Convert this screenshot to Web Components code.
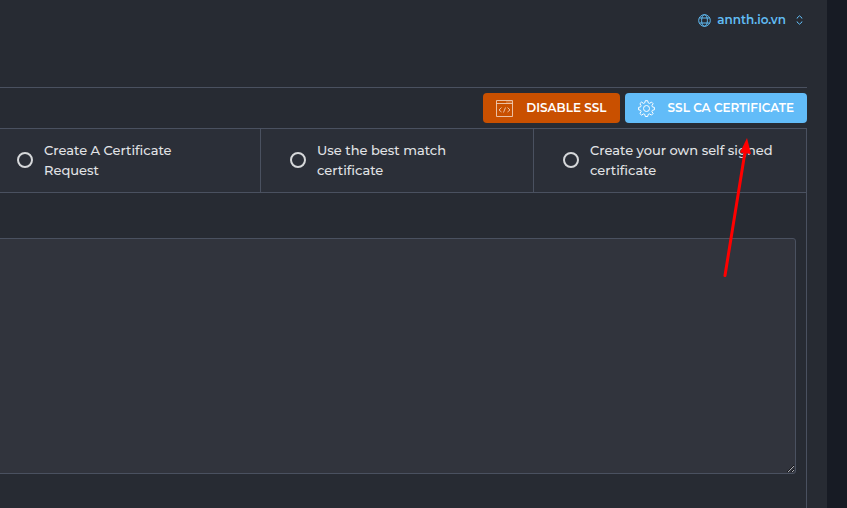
<!DOCTYPE html>
<html lang="en">
<head>
<meta charset="utf-8">
<title>SSL certificates</title>
<style>
  html, body { margin: 0; background: #171b24; }
  body { font-family: Montserrat, Inter, "Open Sans", sans-serif; color: #e1e3e6; }
</style>
</head>
<body>
<ssl-page></ssl-page>
<script>
class Base extends HTMLElement {
  constructor() {
    super();
    this.attachShadow({ mode: "open" }).innerHTML = this.constructor.markup;
  }
}

class DomainPicker extends Base {
  static markup = `
    <style>
      :host { display: block; }
      button { display: flex; align-items: center; gap: 6px; padding: 0; border: 0; background: none;
        color: #61bcf4; font-family: inherit; font-size: 12px; line-height: 20px; font-weight: 600; cursor: pointer; }
      svg { fill: none; stroke: currentColor; display: block; }
      .caret { margin-left: 4px; }
    </style>
    <button type="button" aria-haspopup="listbox">
      <svg width="13" height="13" viewBox="0 0 13 13" aria-hidden="true">
        <circle cx="6.500" cy="6.500" r="5.800"/><ellipse cx="6.500" cy="6.500" rx="2.900" ry="5.800"/>
        <path d="M1.500 4h10M1.500 9h10"/>
      </svg>
      <slot></slot>
      <svg class="caret" width="7" height="10" viewBox="0 0 7 10" aria-hidden="true">
        <path d="M1 3.500V3L3.500.8 6 3v.5M1 6.500V7l2.500 2.200L6 7v-.5"/>
      </svg>
    </button>`;
}

class ActionButton extends Base {
  static markup = `
    <style>
      :host { display: block; }
      button { display: flex; align-items: center; gap: 13px; height: 30px; padding: 0 13px; border: 0; border-radius: 4px;
        background: var(--action-bg); color: #fff; font-family: inherit; font-size: 12px; font-weight: 600; line-height: 20px;
        text-transform: uppercase; white-space: nowrap; cursor: pointer; }
      ::slotted(svg) { display: block; flex: none; fill: none; stroke: currentColor; }
    </style>
    <button type="button"><slot name="icon"></slot><slot></slot></button>`;
}

class SslChoice extends Base {
  static markup = `
    <style>
      :host { display: block; background: #2b2f38; border-right: 1px solid #4a5160; }
      label { display: flex; align-items: center; gap: 11px; box-sizing: border-box; min-height: 63px; padding: 0 28px 2px 29px;
        font-size: 13px; font-weight: 500; line-height: 20px; cursor: pointer; }
      input { appearance: none; flex: none; box-sizing: border-box; width: 16px; height: 16px; margin: 0; border: 2px solid #d6d8da; border-radius: 50%; }
      input:checked { background: radial-gradient(#61bcf4 40%, transparent 45%); }
    </style>
    <label><input type="radio" name="certificate"><span><slot></slot></span></label>`;
}

class CertificateForm extends Base {
  static markup = `
    <style>
      :host { display: flex; flex-direction: column; flex: 1; margin-left: -12px; }
      .choices { display: grid; grid-template-columns: repeat(3, 1fr); border-top: 1px solid #4a5160; border-bottom: 1px solid #4a5160; }
      .body { flex: 1; padding: 45px 10px 34px 0; border-right: 1px solid #4a5160; }
      textarea { display: block; box-sizing: border-box; width: 100%; height: 236px; margin: 0; padding: 12px; resize: both;
        border: 1px solid #4a5160; border-radius: 3px; background: #31343d; color: inherit; font-family: inherit; font-size: 13px; outline: 0; }
    </style>
    <div class="choices" role="radiogroup" aria-label="Certificate source"><slot></slot></div>
    <div class="body"><textarea aria-label="Certificate"></textarea></div>`;
}

class PointerArrow extends Base {
  static markup = `
    <style>
      :host { position: absolute; top: 136px; right: 96px; pointer-events: none; }
      svg { display: block; }
    </style>
    <svg width="30" height="144" viewBox="0 0 30 144" aria-hidden="true">
      <path d="M4 139.500 24 16" fill="none" stroke="#f00" stroke-width="3" stroke-linecap="round"/>
      <path d="M26 2 19 16.500l11 1.500z" fill="#f00"/>
    </svg>`;
}

class SslPage extends Base {
  static markup = `
    <style>
      :host { display: flex; position: relative; box-sizing: border-box; min-height: 100vh; padding-right: 20px; overflow: hidden; }
      main { display: flex; flex-direction: column; flex: 1; min-width: 0; padding-right: 20px; background: #272b33; }
      header { display: flex; justify-content: flex-end; padding: 10px 4px 57px 0; }
      .actions { display: flex; justify-content: flex-end; gap: 5px; padding: 5px 0; border-top: 1px solid #4a5160; }
      .danger { --action-bg: #c95000; }
      .primary { --action-bg: #62bcf8; }
    </style>
    <main>
      <header><domain-picker>annth.io.vn</domain-picker></header>
      <div class="actions">
        <action-button class="danger">
          <svg slot="icon" width="17" height="17" viewBox="0 0 17 17" stroke-width=".8" opacity=".8" aria-hidden="true">
            <path d="M.5.500h16v16H.5zM.5 3.500h16M10.500 2h1M12.500 2h1M14.500 2h1M5.500 7.500 3 10l2.500 2M11.500 7.500 14 10l-2.500 2M9.500 7.500l-2 5"/>
          </svg>Disable SSL</action-button>
        <action-button class="primary">
          <svg slot="icon" width="17" height="17" viewBox="0 0 17 17" stroke-linejoin="round" aria-hidden="true">
            <circle cx="8.500" cy="8.500" r="3"/>
            <path d="M7.300.7h2.400l.5 2.100 1.300.6 2-1.300 1.600 1.600-1.200 2 .5 1.200 2 .5v2.400l-2 .5-.5 1.300 1.200 1.900-1.600 1.600-2-1.200-1.300.5-.5 2.100H7.300l-.5-2.100-1.300-.5-2 1.200-1.600-1.600 1.200-1.900-.5-1.300-2-.5V7.400l2-.5.500-1.200-1.200-2 1.600-1.600 2 1.300 1.300-.6z"/>
          </svg>SSL CA Certificate</action-button>
      </div>
      <certificate-form>
        <ssl-choice>Create A Certificate<br>Request</ssl-choice>
        <ssl-choice>Use the best match certificate</ssl-choice>
        <ssl-choice>Create your own self signed certificate</ssl-choice>
      </certificate-form>
    </main>
    <pointer-arrow></pointer-arrow>`;
}

customElements.define("domain-picker", DomainPicker);
customElements.define("action-button", ActionButton);
customElements.define("ssl-choice", SslChoice);
customElements.define("certificate-form", CertificateForm);
customElements.define("pointer-arrow", PointerArrow);
customElements.define("ssl-page", SslPage);
</script>
</body>
</html>
